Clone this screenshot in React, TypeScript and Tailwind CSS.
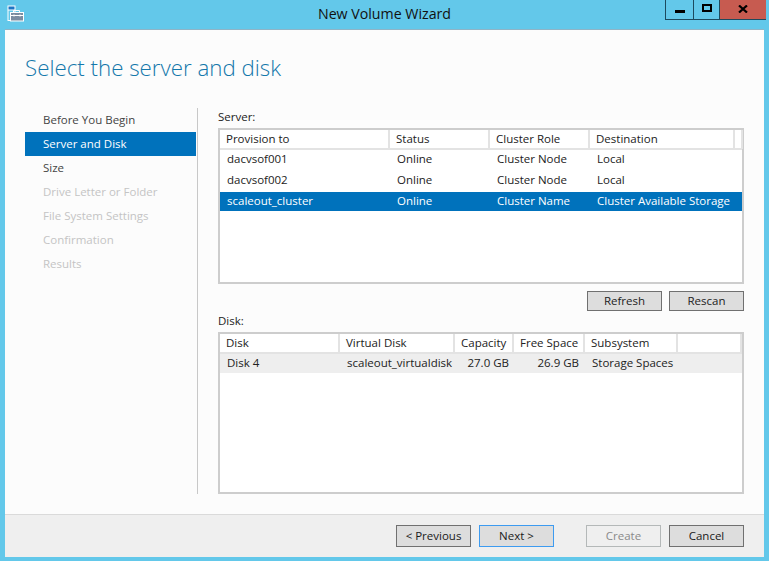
const navItems = [
  { label: "Before You Begin", state: "normal" },
  { label: "Server and Disk", state: "active" },
  { label: "Size", state: "normal" },
  { label: "Drive Letter or Folder", state: "disabled" },
  { label: "File System Settings", state: "disabled" },
  { label: "Confirmation", state: "disabled" },
  { label: "Results", state: "disabled" },
];

const serverCols = [170, 100, 100, 145, 7];
const serverHeaders = ["Provision to", "Status", "Cluster Role", "Destination", ""];
const serverRows = [
  ["dacvsof001", "Online", "Cluster Node", "Local"],
  ["dacvsof002", "Online", "Cluster Node", "Local"],
  ["scaleout_cluster", "Online", "Cluster Name", "Cluster Available Storage"],
];

const diskCols = [120, 115, 59, 71, 93, 64];
const diskHeaders = ["Disk", "Virtual Disk", "Capacity", "Free Space", "Subsystem", ""];

const WizardIcon = () => (
  <svg width="17" height="17" viewBox="0 0 17 17" fill="none">
    <rect x="0.5" y="0.5" width="8" height="15.5" fill="#ffffff" />
    <rect x="1.5" y="1.5" width="6" height="3" fill="#1c75c4" />
    <rect x="1.5" y="5.5" width="6" height="9.5" fill="#63c8ea" />
    <rect x="3.5" y="7.5" width="13" height="8.5" fill="#7c8da1" stroke="#ffffff" />
    <path d="M6.5 7.5V5.5h6V7.5" stroke="#ffffff" />
    <path d="M4 10.5h12" stroke="#ffffff" />
    <path d="M7 9.5v2M13 9.5v2" stroke="#ffffff" />
  </svg>
);

const Btn = ({ label, variant = "normal" }: { label: string; variant?: "normal" | "focus" | "disabled" }) => {
  const look =
    variant === "focus"
      ? "border-[#3d9bf0] bg-[#dddddd] text-[#1a1a1a]"
      : variant === "disabled"
        ? "border-[#b4b8b8] bg-[#efefef] text-[#8a8a8a]"
        : "border-[#707070] bg-[#dddddd] text-[#1a1a1a]";
  return <div className={`flex h-[22px] w-[75px] items-center justify-center border ${look}`}>{label}</div>;
};

const HeaderCell = ({ text, width }: { text: string; width: number }) => (
  <div className="h-[19px] shrink-0 truncate border-r-2 border-[#e3e3e3] pl-[6px] leading-[18px] text-[#222]" style={{ width }}>
    {text}
  </div>
);

export default function App() {
  return (
    <div
      className="flex h-[561px] w-[769px] flex-col overflow-hidden bg-[#63c8ea] text-[11.5px] text-[#222]"
      style={{ fontFamily: '"Open Sans", "Liberation Sans", sans-serif' }}
    >
      {/* title bar */}
      <div className="relative flex h-[29px] shrink-0 items-center justify-center">
        <div className="absolute left-[7px] top-[5px]">
          <WizardIcon />
        </div>
        <span className="pb-[2px] text-[14.2px] text-[#111]">New Volume Wizard</span>
        <div className="absolute left-[665px] top-0 flex h-[20px] border-b border-l border-[#1d4a5e]">
          <div className="flex w-[28px] items-end justify-center border-r border-[#1d4a5e] pb-[6px]">
            <div className="h-[3px] w-[10px] bg-black" />
          </div>
          <div className="flex w-[26px] items-center justify-center border-r border-[#1d4a5e] pb-[3px]">
            <div className="h-[8px] w-[10px] border-2 border-black" />
          </div>
          <div className="flex w-[46px] items-center justify-center bg-[#c75b50] pb-[2px]">
            <svg width="10" height="8" viewBox="0 0 10 8">
              <path d="M1 0.5 9 7.5M9 0.5 1 7.5" stroke="#000" strokeWidth="2.2" />
            </svg>
          </div>
        </div>
      </div>

      {/* client area */}
      <div className="mx-[5px] flex h-[528px] flex-col border-t border-[#8fb4c6] bg-[#fcfcfc]">
        <h1 className="ml-[20px] mt-[21px] h-[37px] text-[22.3px] font-light leading-[34px] text-[#1478ab]">
          Select the server and disk
        </h1>

        <div className="mt-[20px] flex h-[386px]">
          <div className="ml-[20px] flex w-[171px] flex-col">
            {navItems.map((item) => (
              <div
                key={item.label}
                className={`h-[24px] pl-[18px] leading-[24px] ${
                  item.state === "active"
                    ? "bg-[#0072bc] text-white"
                    : item.state === "disabled"
                      ? "text-[#c4c4c4]"
                      : "text-[#444]"
                }`}
              >
                {item.label}
              </div>
            ))}
          </div>
          <div className="ml-[1px] w-[1px] bg-[#c8c8c8]" />

          <div className="ml-[20px] flex w-[526px] flex-col">
            <div className="h-[20px] leading-[17px]">Server:</div>

            <div className="h-[156px] border-2 border-[#cdcdcd] bg-white">
              <div className="flex h-[20px] border-b-2 border-[#e3e3e3]">
                {serverHeaders.map((h, i) => (
                  <HeaderCell key={i} text={h} width={serverCols[i]} />
                ))}
              </div>
              <div className="flex flex-col gap-[2px]">
                {serverRows.map((row, r) => (
                  <div key={r} className={`flex h-[19px] items-start leading-[18px] ${r === 2 ? "bg-[#0072bc] text-white" : ""}`}>
                    {row.map((c, i) => (
                      <div key={i} className="shrink-0 whitespace-nowrap pl-[7px]" style={{ width: serverCols[i] }}>
                        {c}
                      </div>
                    ))}
                  </div>
                ))}
              </div>
            </div>

            <div className="mt-[7px] flex justify-end gap-[7px]">
              <div className="flex h-[20px] w-[75px] items-center justify-center border border-[#707070] bg-[#dddddd]">Refresh</div>
              <div className="flex h-[20px] w-[75px] items-center justify-center border border-[#707070] bg-[#dddddd]">Rescan</div>
            </div>

            <div className="mt-[2px] h-[20px] leading-[15px]">Disk:</div>

            <div className="h-[162px] border-2 border-[#cdcdcd] bg-white">
              <div className="flex h-[20px] border-b-2 border-[#e3e3e3]">
                {diskHeaders.map((h, i) => (
                  <HeaderCell key={i} text={h} width={diskCols[i]} />
                ))}
              </div>
              <div className="flex h-[19px] items-start bg-[#eeeeee] leading-[18px]">
                <div className="w-[120px] shrink-0 pl-[7px]">Disk 4</div>
                <div className="w-[115px] shrink-0 pl-[7px]">scaleout_virtualdisk</div>
                <div className="w-[54px] shrink-0 text-right">27.0 GB</div>
                <div className="w-[70px] shrink-0 text-right">26.9 GB</div>
                <div className="shrink-0 whitespace-nowrap pl-[13px]">Storage Spaces</div>
              </div>
            </div>
          </div>
        </div>

        {/* footer */}
        <div className="mt-[20px] flex flex-1 items-start border-t border-[#dadada] bg-[#efefef] pl-[391px] pt-[10px]">
          <Btn label="< Previous" />
          <div className="ml-[8px]">
            <Btn label="Next >" variant="focus" />
          </div>
          <div className="ml-[32px]">
            <Btn label="Create" variant="disabled" />
          </div>
          <div className="ml-[8px]">
            <Btn label="Cancel" />
          </div>
        </div>
      </div>
    </div>
  );
}
